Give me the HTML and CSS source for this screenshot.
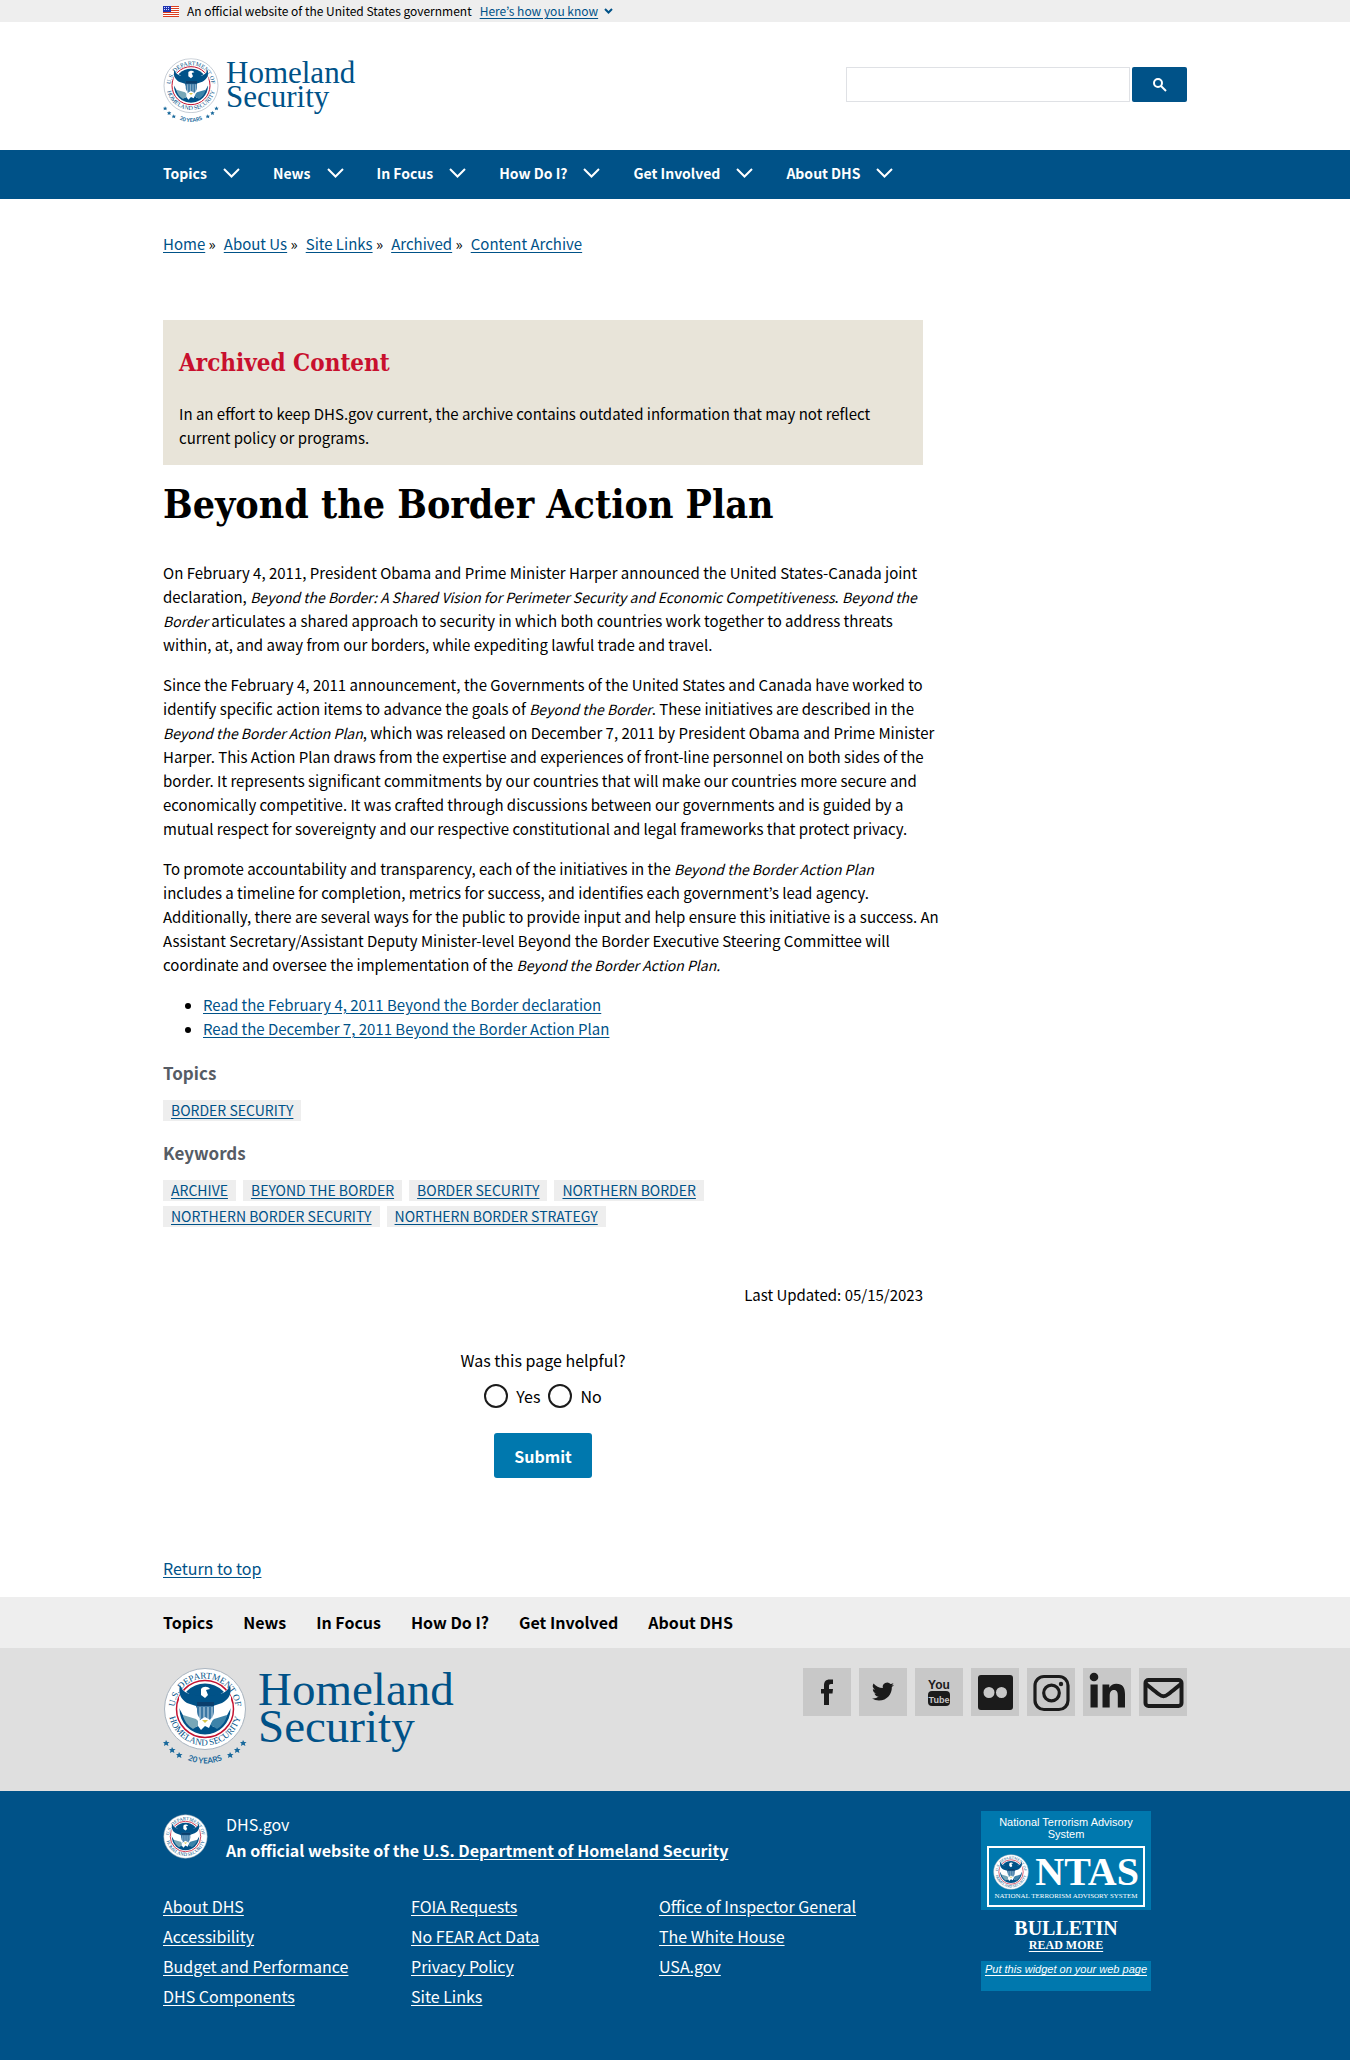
FILE: index.html
```html
<!DOCTYPE html>
<html lang="en">
<head>
<meta charset="utf-8">
<meta name="viewport" content="width=device-width, initial-scale=1">
<title>Beyond the Border Action Plan | Homeland Security</title>
<link rel="stylesheet" href="styles.css">
</head>
<body id="top">
<svg class="defs" width="0" height="0" aria-hidden="true">
  <defs>
    <path id="arc-top" d="M11.5 41a30.500 30.500 0 0 1 61 0"/>
    <path id="arc-bottom" d="M5.500 41a36.500 36.500 0 0 0 73 0"/>
    <path id="arc-years" d="M14 86Q42 105 70 86"/>
    <symbol id="seal" viewBox="0 0 84 82">
      <circle cx="42" cy="41" r="40.500" fill="#fff" stroke="#a9b4bf"/>
      <circle cx="42" cy="41" r="28.500" fill="#fff" stroke="#c41230" stroke-width="1.500"/>
      <circle cx="42" cy="41" r="25.500" fill="#005288"/>
      <path d="M16 29l4-7 8 5 8 9 3 10-5 13-7-3-6-7-5-9z" fill="#fff"/>
      <path d="M68 29l-4-7-8 5-8 9-3 10 5 13 7-3 6-7 5-9z" fill="#fff"/>
      <path d="M17 17c2 6 7 9 12 9l7 2 1-7c1-5 9-6 12-2l-3 3 2 6 7-2c5 0 10-3 12-9 2 9-1 14-8 18l-9 3-2 8H36l-3-8-9-3c-6-4-9-9-7-18z" fill="#005288"/>
      <path d="M38 21c2-3 7-3 9 0l-4 1 2 5-3 3-4-3z" fill="#fff"/>
      <path d="M34 34h17v9c0 6-4 9-8 11-5-2-9-5-9-11z" fill="#3b78a5"/>
      <path d="M34 34h17v4H34z" fill="#0a3f6d"/>
      <path d="M37 39v12M41 39v14M45 39v14M49 39v11" stroke="#c9dce8" fill="none"/>
      <path d="M20 47l13 4 5 5-8 5c-5-3-9-8-10-14z" fill="#78a7b7"/>
      <path d="M64 47l-13 4-5 5 8 5c5-3 9-8 10-14z" fill="#3d83a9"/>
      <path d="M35 53l7-4 7 4-3 7-4-2-4 4-3-4z" fill="#fff"/>
      <path d="M39 52h6l-3 3z" fill="#d8c64b"/>
      <text class="seal-text"><textPath href="#arc-top" startOffset="50%" text-anchor="middle">U.S. DEPARTMENT OF</textPath></text>
      <text class="seal-text"><textPath href="#arc-bottom" startOffset="50%" text-anchor="middle">HOMELAND SECURITY</textPath></text>
    </symbol>
    <symbol id="anniversary" viewBox="0 0 84 98">
      <use href="#seal" width="84" height="82"/>
      <g fill="#19699c">
        <path id="star" d="M3 72l1.200 2h2.300l-1.700 1.600.6 2.400-2.400-1.300-2 1.300.5-2.400L0 74h2.300z"/>
        <use href="#star" x="6" y="7"/><use href="#star" x="13" y="12"/>
        <use href="#star" x="77"/><use href="#star" x="71" y="7"/><use href="#star" x="64" y="12"/>
      </g>
      <text class="years-text"><textPath href="#arc-years" startOffset="50%" text-anchor="middle">20 YEARS</textPath></text>
    </symbol>
    <symbol id="chevron" viewBox="0 0 17 10"><path d="M1 1l7.500 7.500L16 1" fill="none" stroke="currentColor" stroke-width="2"/></symbol>
  </defs>
</svg>

<section class="gov-banner" aria-label="Official government website">
  <div class="container gov-row">
    <svg class="flag" viewBox="0 0 16 11" aria-hidden="true"><path fill="#fff" d="M0 0h16v11H0z"/><path d="M0 .5h16M0 2.500h16M0 4.500h16M0 6.500h16M0 8.500h16M0 10.500h16" stroke="#db3e1f"/><path fill="#1e33b1" d="M0 0h8v6H0z"/><path d="M1 1.500h6M1 3.500h6" stroke="#cfd6ff" stroke-dasharray="1 1"/></svg>
    <span class="gov-text">An official website of the United States government</span>
    <button class="gov-button" type="button"><span>Here’s how you know</span><svg width="9" height="6" viewBox="0 0 9 6" fill="none" stroke="currentColor" stroke-width="2" aria-hidden="true"><path d="M1 1l3.500 3.500L8 1"/></svg></button>
  </div>
</section>

<header>
  <div class="container header-row">
    <a class="brand" href="#top"><svg class="brand-seal" aria-hidden="true"><use href="#anniversary"/></svg><span class="brand-name">Homeland<br>Security</span></a>
    <form class="search">
      <input class="search-input" type="search" aria-label="Search">
      <button class="search-button" type="button" aria-label="Search"><svg width="14" height="14" viewBox="0 0 14 14" fill="none" stroke="#fff" stroke-width="2" aria-hidden="true"><circle cx="5" cy="5" r="4"/><path d="M8 8l5 5"/></svg></button>
    </form>
  </div>
  <nav class="main-nav" aria-label="Main">
    <div class="container main-nav-row">
      <button type="button">Topics<svg><use href="#chevron"/></svg></button>
      <button type="button">News<svg><use href="#chevron"/></svg></button>
      <button type="button">In Focus<svg><use href="#chevron"/></svg></button>
      <button type="button">How Do I?<svg><use href="#chevron"/></svg></button>
      <button type="button">Get Involved<svg><use href="#chevron"/></svg></button>
      <button type="button">About DHS<svg><use href="#chevron"/></svg></button>
    </div>
  </nav>
</header>

<main class="container">
  <nav aria-label="Breadcrumb">
    <ol class="breadcrumb">
      <li><a href="#">Home</a></li>
      <li><a href="#">About Us</a></li>
      <li><a href="#">Site Links</a></li>
      <li><a href="#">Archived</a></li>
      <li><a href="#">Content Archive</a></li>
    </ol>
  </nav>
  <div class="content">
    <aside class="archive-note">
      <h2>Archived Content</h2>
      <p>In an effort to keep DHS.gov current, the archive contains outdated information that may not reflect current policy or programs.</p>
    </aside>
    <article>
      <h1>Beyond the Border Action Plan</h1>
      <p>On February 4, 2011, President Obama and Prime Minister Harper announced the United States-Canada joint<br>declaration, <em>Beyond the Border: A Shared Vision for Perimeter Security and Economic Competitiveness</em>. <em>Beyond the<br>Border</em> articulates a shared approach to security in which both countries work together to address threats<br>within, at, and away from our borders, while expediting lawful trade and travel.</p>
      <p>Since the February 4, 2011 announcement, the Governments of the United States and Canada have worked to<br>identify specific action items to advance the goals of <em>Beyond the Border</em>. These initiatives are described in the<br><em>Beyond the Border Action Plan</em>, which was released on December 7, 2011 by President Obama and Prime Minister<br>Harper. This Action Plan draws from the expertise and experiences of front-line personnel on both sides of the<br>border. It represents significant commitments by our countries that will make our countries more secure and<br>economically competitive. It was crafted through discussions between our governments and is guided by a<br>mutual respect for sovereignty and our respective constitutional and legal frameworks that protect privacy.</p>
      <p>To promote accountability and transparency, each of the initiatives in the <em>Beyond the Border Action Plan</em><br>includes a timeline for completion, metrics for success, and identifies each government’s lead agency.<br>Additionally, there are several ways for the public to provide input and help ensure this initiative is a success. An<br>Assistant Secretary/Assistant Deputy Minister-level Beyond the Border Executive Steering Committee will<br>coordinate and oversee the implementation of the <em>Beyond the Border Action Plan.</em></p>
      <ul class="documents">
        <li><a href="#">Read the February 4, 2011 Beyond the Border declaration</a></li>
        <li><a href="#">Read the December 7, 2011 Beyond the Border Action Plan</a></li>
      </ul>
    </article>
    <section class="terms">
      <h2>Topics</h2>
      <ul class="tags"><li><a href="#">Border Security</a></li></ul>
    </section>
    <section class="terms">
      <h2>Keywords</h2>
      <ul class="tags">
        <li><a href="#">Archive</a></li>
        <li><a href="#">Beyond the Border</a></li>
        <li><a href="#">Border Security</a></li>
        <li><a href="#">Northern Border</a></li>
        <li><a href="#">Northern Border Security</a></li>
        <li><a href="#">Northern Border Strategy</a></li>
      </ul>
    </section>
    <p class="updated">Last Updated: 05/15/2023</p>
    <form class="feedback">
      <fieldset>
        <legend>Was this page helpful?</legend>
        <div class="choices">
          <input type="radio" id="helpful-yes" name="helpful"><label for="helpful-yes">Yes</label>
          <input type="radio" id="helpful-no" name="helpful"><label for="helpful-no">No</label>
        </div>
      </fieldset>
      <button class="submit" type="button">Submit</button>
    </form>
  </div>
  <a class="to-top" href="#top">Return to top</a>
</main>

<footer>
  <nav class="footer-nav" aria-label="Footer">
    <div class="container footer-nav-row">
      <a href="#">Topics</a><a href="#">News</a><a href="#">In Focus</a><a href="#">How Do I?</a><a href="#">Get Involved</a><a href="#">About DHS</a>
    </div>
  </nav>
  <div class="footer-brand">
    <div class="container footer-brand-row">
      <a class="brand brand-large" href="#top"><svg class="brand-seal" aria-hidden="true"><use href="#anniversary"/></svg><span class="brand-name">Homeland<br>Security</span></a>
      <div class="social">
        <a href="#" aria-label="Facebook"><svg viewBox="0 0 48 48"><path d="M21 37V25.500h-3V21h3v-3.500c0-4 2-6 5.500-6H30v4.500h-2c-1.500 0-2 .7-2 2v3h4l-.5 4.500H26V37z"/></svg></a>
        <a href="#" aria-label="Twitter"><svg viewBox="0 0 48 48"><path transform="translate(13 12.500) scale(.92)" d="M23.950 4.570a10 10 0 0 1-2.820.77 4.960 4.960 0 0 0 2.160-2.720c-.95.550-2 .95-3.130 1.180a4.920 4.920 0 0 0-8.380 4.480C7.690 8.090 4.070 6.130 1.640 3.160a4.920 4.920 0 0 0 1.520 6.570 4.900 4.900 0 0 1-2.230-.61v.06a4.920 4.920 0 0 0 3.950 4.830 5 5 0 0 1-2.210.08 4.940 4.940 0 0 0 4.600 3.420A9.870 9.870 0 0 1 0 19.540a14 14 0 0 0 7.550 2.210c9.050 0 14-7.500 14-13.980 0-.21 0-.42-.02-.63a9.940 9.940 0 0 0 2.420-2.570z"/></svg></a>
        <a href="#" aria-label="YouTube"><svg viewBox="0 0 48 48"><rect x="13" y="23" width="22" height="15" rx="4"/><text class="yt" x="24" y="21">You</text><text class="yt yt-tube" x="24" y="35">Tube</text></svg></a>
        <a href="#" aria-label="Flickr"><svg viewBox="0 0 48 48"><path fill-rule="evenodd" d="M10 7h29a3 3 0 0 1 3 3v29a3 3 0 0 1-3 3H10a3 3 0 0 1-3-3V10a3 3 0 0 1 3-3zm8 12a5 5 0 1 0 0 11 5 5 0 0 0 0-11zm12.500 0a5 5 0 1 0 0 11 5 5 0 0 0 0-11z"/></svg></a>
        <a href="#" aria-label="Instagram"><svg viewBox="0 0 48 48"><g fill="none" stroke="#1b1b1b" stroke-width="3.200"><rect x="8" y="8.500" width="33" height="33" rx="9"/><circle cx="24.500" cy="25" r="7.800"/></g><circle cx="34" cy="16" r="2.200"/></svg></a>
        <a href="#" aria-label="LinkedIn"><svg viewBox="0 0 48 48"><circle cx="11" cy="9" r="4.300"/><path d="M7.500 16.500h7.200V39.500H7.500zM19.500 16.500h6.800v3.200c1.500-2.500 3.800-3.900 7-3.900 6.400 0 8.700 3.900 8.700 10.500v13.200h-7.200V28c0-3.500-.8-6-3.800-6-3.200 0-4.300 2.400-4.300 6v11.500h-7.200z"/></svg></a>
        <a href="#" aria-label="Email"><svg viewBox="0 0 48 48"><g fill="none" stroke="#1b1b1b" stroke-width="4"><rect x="6.500" y="12" width="36" height="26" rx="3"/><path d="M6.500 15.500c5 4 9 7.500 13 10.500 4 3 6 3 10 0s8-6.500 13-10.500"/></g></svg></a>
      </div>
    </div>
  </div>
  <div class="identifier">
    <div class="container identifier-row">
      <div class="identifier-main">
        <div class="agency">
          <svg class="agency-seal" aria-hidden="true"><use href="#seal"/></svg>
          <p>DHS.gov<br><strong>An official website of the <a href="#">U.S. Department of Homeland Security</a></strong></p>
        </div>
        <ul class="required-links">
          <li><a href="#">About DHS</a></li><li><a href="#">Accessibility</a></li><li><a href="#">Budget and Performance</a></li><li><a href="#">DHS Components</a></li>
          <li><a href="#">FOIA Requests</a></li><li><a href="#">No FEAR Act Data</a></li><li><a href="#">Privacy Policy</a></li><li><a href="#">Site Links</a></li>
          <li><a href="#">Office of Inspector General</a></li><li><a href="#">The White House</a></li><li><a href="#">USA.gov</a></li>
        </ul>
      </div>
      <aside class="ntas">
        <div class="ntas-top">
          <p>National Terrorism Advisory System</p>
          <div class="ntas-logo">
            <div class="ntas-mark"><svg class="ntas-seal" aria-hidden="true"><use href="#seal"/></svg><span>NTAS</span></div>
            <small>NATIONAL TERRORISM ADVISORY SYSTEM</small>
          </div>
        </div>
        <div class="ntas-bulletin"><span>BULLETIN</span><a href="#">READ MORE</a></div>
        <a class="ntas-widget" href="#">Put this widget on your web page</a>
      </aside>
    </div>
  </div>
</footer>
</body>
</html>
```
FILE: styles.css
```css
* { box-sizing: border-box; }

body {
  margin: 0;
  background: #fff;
  color: #000;
  font: 15px/24px "Noto Sans CJK KR", "Noto Sans", sans-serif;
}

a { color: #005288; text-underline-offset: 2px; }
button, input { font: inherit; }
p, h1, h2, ul, ol { margin: 0; padding: 0; }
ul, ol { list-style: none; }
svg { display: block; flex: none; }
.defs { position: absolute; }

.container {
  width: calc(100% - 64px);
  max-width: 1024px;
  margin: 0 auto;
}

/* Government banner */
.gov-banner { background: #eee; }
.gov-row { display: flex; align-items: center; height: 22px; font-size: 12px; line-height: 22px; }
.flag { width: 16px; height: 11px; margin-right: 8px; }
.gov-button {
  display: flex;
  align-items: center;
  gap: 6px;
  margin-left: 8px;
  padding: 0;
  border: 0;
  background: none;
  color: #005288;
  white-space: nowrap;
}
.gov-button span { text-decoration: underline; text-underline-offset: 2px; }

/* Header */
.header-row { display: flex; justify-content: space-between; align-items: flex-start; height: 128px; padding-top: 36px; }
.brand { display: flex; gap: 7px; text-decoration: none; }
.brand-seal { width: 56px; height: 66px; }
.brand-name { padding-top: 3px; color: #005288; font: 31px/24px "Liberation Serif", serif; }
.brand-large { gap: 11px; }
.brand-large .brand-seal { width: 84px; height: 98px; }
.brand-large .brand-name { font-size: 47px; line-height: 37px; }
.seal-text { fill: #005288; font: 9px "Liberation Serif", serif; }
.years-text { fill: #19699c; font: bold 8px Lato, sans-serif; }

.search { display: flex; gap: 2px; padding-top: 9px; }
.search-input { width: 284px; height: 35px; padding: 0 8px; border: 1px solid #dfe1e5; background: #fff; }
.search-button { display: grid; place-items: center; width: 55px; height: 35px; padding: 0; border: 0; border-radius: 2px; background: #005288; }

.main-nav { background: #005288; }
.main-nav-row { display: flex; gap: 33px; height: 49px; padding-bottom: 4px; }
.main-nav button {
  display: flex;
  align-items: center;
  gap: 16px;
  padding: 0;
  border: 0;
  background: none;
  color: #fff;
  font-size: 14px;
  font-weight: 700;
  white-space: nowrap;
}
.main-nav svg { width: 17px; height: 10px; }

/* Content */
.breadcrumb { display: flex; flex-wrap: wrap; gap: 8px; padding: 33px 0 64px; }
.breadcrumb li:not(:last-child)::after { content: " »"; }
.content { max-width: 760px; }
.archive-note { padding: 24px 16px 15px; background: #e8e4d9; }
.archive-note h2 { margin-bottom: 20px; color: #c8102e; font: bold 24px/38px "DejaVu Serif Condensed", "DejaVu Serif", serif; }
article h1 { padding: 13px 0 31px; font: bold 39px/52px "DejaVu Serif Condensed", "DejaVu Serif", serif; }
article p { margin: 0 -24px 16px 0; }
article em { font-size: 14px; }
.documents { padding-left: 40px; list-style: disc; }

.terms { padding-top: 16px; }
.terms h2 { color: #565c65; font-size: 17px; line-height: 32px; }
.tags { display: flex; flex-wrap: wrap; gap: 5px 7px; padding-top: 11px; }
.tags a { display: block; padding: 0 8px; background: #eee; font-size: 14px; line-height: 21px; text-transform: uppercase; }
.updated { padding-top: 56px; text-align: right; }

.feedback { display: flex; flex-direction: column; align-items: center; padding: 41px 0 78px; font-size: 16px; }
.feedback fieldset { margin: 0; padding: 0; border: 0; }
.feedback legend { padding: 0; }
.choices { display: flex; align-items: center; justify-content: center; gap: 8px; padding-top: 12px; }
.choices input { appearance: none; width: 24px; height: 24px; margin: 0; border: 2px solid #1b1b1b; border-radius: 50%; background: #fff; }
.submit { height: 45px; margin-top: 25px; padding: 0 20px; border: 0; border-radius: 3px; background: #0078ae; color: #fff; font-weight: 700; }
.to-top { display: block; width: max-content; padding-bottom: 17px; font-size: 16px; }

/* Footer */
.footer-nav { background: #eee; }
.footer-nav-row { display: flex; flex-wrap: wrap; gap: 0 30px; font-size: 16px; font-weight: 700; line-height: 51px; }
.footer-nav a { color: #000; text-decoration: none; }
.footer-brand { background: #dfdfdf; }
.footer-brand-row { display: flex; justify-content: space-between; align-items: flex-start; padding: 20px 0 25px; }
.social { display: flex; gap: 8px; }
.social a { background: #c8c8c8; }
.social svg { width: 48px; height: 48px; fill: #1b1b1b; }
.yt { font: bold 12px "Liberation Sans Narrow", "Liberation Sans", sans-serif; text-anchor: middle; }
.yt-tube { fill: #c8c8c8; font-size: 9px; }

.identifier { min-height: 269px; background: #005288; color: #fff; }
.identifier a { color: #fff; }
.identifier-row { display: flex; gap: 74px; padding: 20px 0 64px; font-size: 16px; }
.identifier-main { flex: 0 1 744px; }
.agency { display: flex; gap: 18px; }
.agency p { line-height: 26px; }
.agency-seal { width: 45px; height: 45px; margin-top: 3px; }
.required-links { display: grid; grid-template-rows: repeat(4, 30px); grid-auto-flow: column; grid-auto-columns: 1fr; padding-top: 28px; line-height: 30px; }

.ntas { width: 170px; font: 11px/12px "Liberation Sans", Arial, sans-serif; text-align: center; }
.ntas-top { height: 99px; padding: 5px 6px; background: #0078ae; }
.ntas-logo { height: 61px; margin-top: 6px; padding: 6px 4px 0; border: 2px solid #fff; font-family: "Liberation Serif", serif; }
.ntas-mark { display: flex; align-items: center; justify-content: space-between; height: 36px; font-size: 40px; line-height: 36px; font-weight: 700; }
.ntas-seal { width: 36px; height: 36px; }
.ntas-logo small { display: block; font-size: 7px; line-height: 12px; white-space: nowrap; }
.ntas-bulletin { display: flex; flex-direction: column; align-items: center; height: 51px; padding-top: 8px; font: bold 20px/20px "Liberation Serif", serif; }
.ntas-bulletin a { font-size: 12px; line-height: 15px; }
.ntas-widget { display: block; height: 30px; padding-top: 2px; background: #0078ae; font-style: italic; white-space: nowrap; }
```
